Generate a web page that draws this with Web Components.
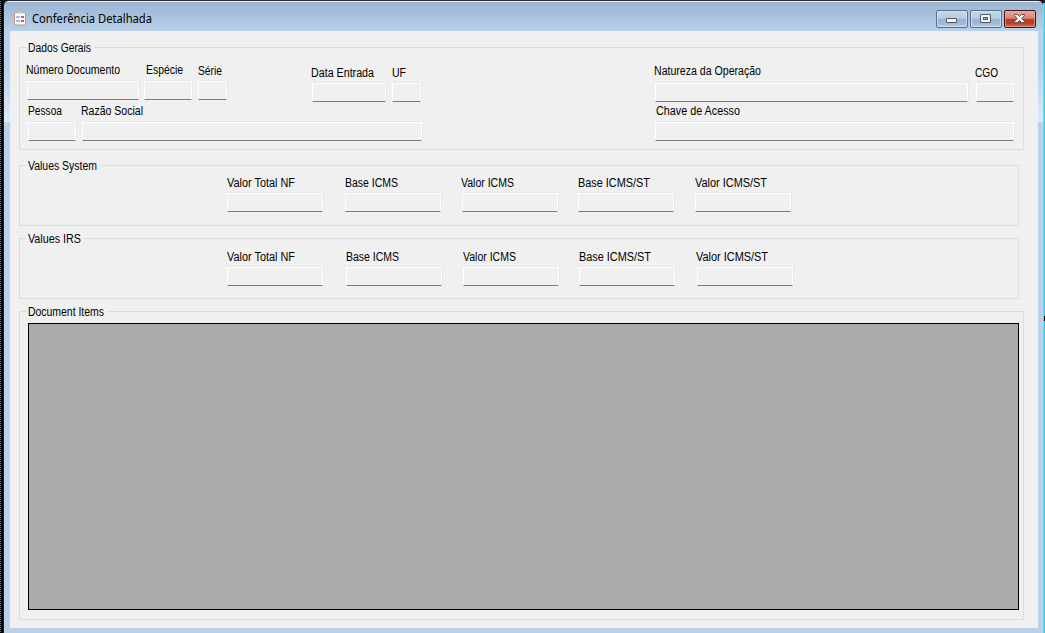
<!DOCTYPE html>
<html lang="pt"><head><meta charset="utf-8"><title>Conferência Detalhada</title>
<style>html,body{margin:0;width:1045px;height:633px;overflow:hidden;background:#b9d1ea}</style></head><body>
<detail-window></detail-window>
<script>
class FitText extends HTMLElement{
  connectedCallback(){
    this.attachShadow({mode:'open'}).innerHTML=`<style>:host{display:block;white-space:nowrap;height:14px;line-height:14px}span{display:inline-block;transform-origin:0 50%}</style><span><slot></slot></span>`;
    const s=this.shadowRoot.querySelector('span');
    requestAnimationFrame(()=>{const w=s.offsetWidth,t=+this.getAttribute('width');if(w&&t)s.style.transform=`scaleX(${t/s.getBoundingClientRect().width})`});
  }
}
customElements.define('fit-text',FitText);

class FormField extends HTMLElement{
  connectedCallback(){
    const a=n=>this.getAttribute(n);
    this.attachShadow({mode:'open'}).innerHTML=`<style>
    :host{display:block;flex:none;width:${a('w')}px;margin-left:${a('ml')||0}px;margin-top:${a('mt')||0}px}
    fit-text{margin-left:${a('dx')||0}px;width:${a('tw')}px}
    .box{box-sizing:border-box;height:19px;margin-top:${a('gap')}px;background:#f0f0f0;border:1px solid #fff;border-bottom-color:#7c7c7c;box-shadow:1px -1px 0 #e7e7e7}
    </style><fit-text width="${a('tw')}">${a('label')}</fit-text><div class="box"></div>`;
  }
}
customElements.define('form-field',FormField);

class GroupBox extends HTMLElement{
  connectedCallback(){
    const a=n=>this.getAttribute(n),tw=+a('tw');
    this.attachShadow({mode:'open'}).innerHTML=`<style>
    :host{display:block;box-sizing:border-box;width:${a('w')}px;height:${a('h')}px;margin-top:${a('mt')}px;border:1px solid #dcdcdc}
    .cap{height:14px;margin:-7px 0 -7px 6px;padding-left:2px;width:${tw+3}px;background:#f0f0f0}
    </style><div class="cap"><fit-text width="${tw}">${a('label')}</fit-text></div><slot></slot>`;
  }
}
customElements.define('group-box',GroupBox);

class WindowButton extends HTMLElement{
  connectedCallback(){
    const k=this.getAttribute('kind'),c=k==='close';
    const icon={
      min:'<rect x="10.5" y="8.5" width="10" height="4" rx=".5" fill="#f5f5f5" stroke="#535666"/>',
      max:'<rect x="10.5" y="4.5" width="10" height="8" rx=".5" fill="#f5f5f5" stroke="#535666"/><rect x="13.5" y="7.5" width="4" height="2" fill="#8fb0d0" stroke="#535666"/>',
      close:'<path d="M10.5 4.5h3l2 2 2-2h3v1.2l-2.8 2.8 2.8 2.8v1.2h-3l-2-2-2 2h-3v-1.2l2.8-2.8-2.8-2.8z" fill="#f7f7f7" stroke="#535666"/>'}[k];
    this.attachShadow({mode:'open'}).innerHTML=`<style>
    :host{display:block;box-sizing:border-box;width:32px;height:18px;border:1px solid ${c?'#43141c':'#5c6f87'};border-radius:2px;
    background:${c?'linear-gradient(#e8a99c 0,#d98172 46%,#bb3f29 50%,#b83a23 75%,#d27857)':'linear-gradient(#c3d6e9 0,#b7cde4 46%,#98b4d1 50%,#9bb8d6 75%,#b6d0ea)'};
    box-shadow:inset 0 0 0 1px ${c?'#e8a99caa':'#d8e6f3bb'}}
    svg{display:block;margin:-1px}</style><svg width="32" height="18">${icon}</svg>`;
  }
}
customElements.define('window-button',WindowButton);

class DetailWindow extends HTMLElement{
  connectedCallback(){
    const vals=(ml,tws,dx,labels=['Valor Total NF','Base ICMS','Valor ICMS','Base ICMS/ST','Valor ICMS/ST'])=>labels.map((l,i)=>`<form-field label="${l}" w="96" ml="${ml[i]}" tw="${tws[i]}" dx="${dx[i]}" gap="3"></form-field>`).join('');
    this.attachShadow({mode:'open'}).innerHTML=`<style>
    :host{display:grid;grid-template-columns:4px 1039px 2px;width:1045px;height:633px;background:#000;font:12px "Liberation Sans",Arial,sans-serif;color:#000}
    .l{background:linear-gradient(90deg,transparent 1px,#000 1px),repeating-linear-gradient(#000 0 1px,#777 1px 2px)}
    .l{border-right:1px solid #222;box-sizing:border-box}
    .r{background:linear-gradient(#000,#000) 1px 316px/1px 5px no-repeat,linear-gradient(#222,#222) 0 0/2px 3px no-repeat,linear-gradient(90deg,#9bc9ea 1px,#33cbea 1px)}
    .frame{box-sizing:border-box;height:633px;border-top:1px solid #2e2d35;border-radius:5px 5px 0 0;background:linear-gradient(#e9f1f8 0 1px,transparent 1px),linear-gradient(#99b4d1,#b9d1ea) 0 0/100% 30px no-repeat,linear-gradient(#b9d1ea 0,#b9d1ea 35px,#dce9f6 90px,#dce9f6 91px,#b9d1ea 91px) 0 30px/100% 602px no-repeat}
    .bar{display:flex;height:30px;box-sizing:border-box;padding:9px 7px 0 9px}
    .icon{margin-top:1px;flex:none}
    .bar fit-text{font:12px "Noto Sans","Open Sans",sans-serif;line-height:14px;margin:2px 0 0 5px;flex:1}
    .buttons{display:flex;gap:2px}
    .client{margin-left:6px;width:1028px;height:597px;background:#f0f0f0;box-sizing:border-box;padding:0 0 0 9px;display:flow-root}
    .row{display:flex;align-items:flex-start}
    .grid{box-sizing:border-box;width:991px;height:287px;margin:11px 0 0 8px;border:1px solid #000;background:#ababab}
    </style>
    <div class="l"></div>
    <div class="frame">
      <div class="bar"><svg class="icon" width="14" height="15"><rect x="1.5" y="1.5" width="11" height="12.5" rx="1" fill="#f7f9fb" stroke="#c0937e"/><path d="M4 1.5h6" stroke="#c4c4c8" stroke-width="2"/><path d="M3 6h4M3 10h4" stroke="#8aabd2" stroke-width="1.4"/><path d="M8 5h3v2H8zM8 9h3v2H8z" fill="#f04b4b"/></svg>
      <fit-text width="120">Conferência Detalhada</fit-text>
      <div class="buttons"><window-button kind="min"></window-button><window-button kind="max"></window-button><window-button kind="close"></window-button></div></div>
      <div class="client">
        <group-box label="Dados Gerais" tw="63" w="1005" h="103" mt="16">
          <div class="row" style="margin-top:15px;height:42px">
            <form-field label="Número Documento" w="112" ml="7" tw="94" dx="-1" gap="4"></form-field>
            <form-field label="Espécie" w="48" ml="5" tw="37" dx="2" gap="4"></form-field>
            <form-field label="Série" w="29" ml="6" tw="24" gap="3" mt="1"></form-field>
            <form-field label="Data Entrada" w="74" ml="85" tw="63" dx="-1" gap="3" mt="3"></form-field>
            <form-field label="UF" w="29" ml="6" tw="14" gap="3" mt="3"></form-field>
            <form-field label="Natureza da Operação" w="313" ml="234" tw="107" dx="-1" gap="5" mt="1"></form-field>
            <form-field label="CGO" w="38" ml="8" tw="23" dx="-1" gap="3" mt="3"></form-field>
          </div>
          <div class="row" style="margin-top:-1px">
            <form-field label="Pessoa" w="48" ml="8" tw="34" gap="4"></form-field>
            <form-field label="Razão Social" w="340" ml="6" tw="62" dx="-1" gap="4"></form-field>
            <form-field label="Chave de Acesso" w="359" ml="233" tw="84" dx="1" gap="4"></form-field>
          </div>
        </group-box>
        <group-box label="Values System" tw="69" w="1000" h="61" mt="15"><div class="row" style="margin-top:10px">${vals([207,22,21,20,21],[68,53,53,72,72],[0,0,-1,0,0])}</div></group-box>
        <group-box label="Values IRS" tw="53" w="1000" h="61" mt="12"><div class="row" style="margin-top:11px">${vals([207,23,21,20,22],[68,53,53,72,72],[0,0,0,0,-1])}</div></group-box>
        <group-box label="Document Items" tw="76" w="1005" h="309" mt="12"><div class="grid"></div></group-box>
      </div>
    </div>
    <div class="r"></div>`;
  }
}
customElements.define('detail-window',DetailWindow);
</script></body></html>
